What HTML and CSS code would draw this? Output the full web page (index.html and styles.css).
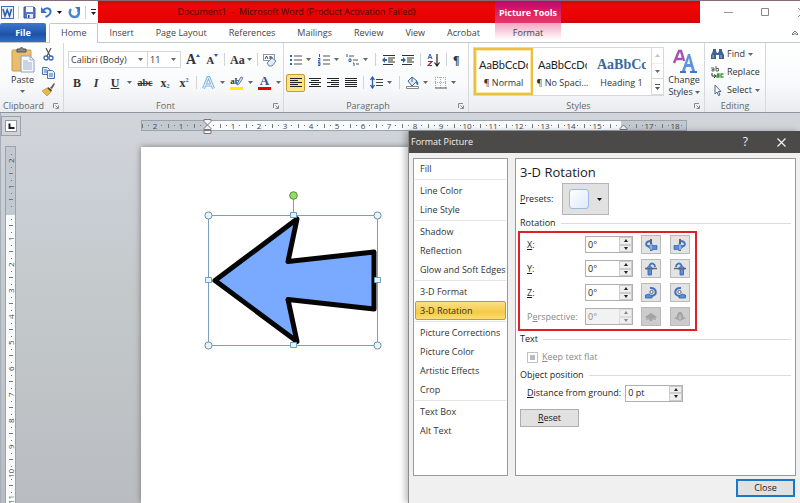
FILE: index.html
```html
<!DOCTYPE html>
<html lang="en">
<head>
    <meta charset="UTF-8">
    <meta name="viewport" content="width=device-width, initial-scale=1.0">
    <title>Document1 - Microsoft Word</title>
    <link rel="stylesheet" href="styles.css">
</head>
<body>
    <div class="word">
        <header class="titlebar">
            <div class="quick-access">
                <svg class="app-icon" width="13" height="13" viewBox="0 0 13 13"><rect x=".5" y=".5" width="12" height="12" fill="#e8f1fb" stroke="#3d74b8"/><path d="M2 3l2 7 2.200-6 2.300 6 2-7" fill="none" stroke="#2a5ea8" stroke-width="1.600"/></svg>
                <span class="bar"></span>
                <button class="icon" aria-label="Save"><svg width="13" height="13" viewBox="0 0 13 13"><path d="M1 1h10l1 1v10H1z" fill="#5a78c8" stroke="#3a4f96"/><path d="M3 1h7v5H3z" fill="#f4f8ff"/><path d="M4 8h6v4H4z" fill="#e4e9f5"/><path d="M5 9h1.500v3H5z" fill="#34488c"/></svg></button>
                <button class="icon" aria-label="Undo"><svg width="13" height="13" viewBox="0 0 13 13"><path d="M3 4.500C6 1 11 2 10.500 6c-.3 2.500-2.500 4-5 5" fill="none" stroke="#3a74c4" stroke-width="2"/><path d="M1 1v6h6z" fill="#3a74c4"/></svg></button>
                <svg class="caret dark" viewBox="0 0 5 3"><path d="M0 0h5L2.500 3z"/></svg>
                <button class="icon redo" aria-label="Repeat"><svg width="13" height="13" viewBox="0 0 13 13"><path d="M3 3C.5 6 2 11 6.500 11S12 6 9.500 4" fill="none" stroke="#4a86d0" stroke-width="2.400"/><path d="M7 1h5v5z" fill="#3a74c4"/></svg></button>
                <span class="bar"></span>
                <svg width="7" height="6" viewBox="0 0 7 6"><path d="M1 0h5v1H1zM1 3h5L3.500 6z" fill="#222"/></svg>
            </div>
            <div class="title">Document1&nbsp; -&nbsp; Microsoft Word (Product Activation Failed)</div>
            <div class="context-title">Picture Tools</div>
            <div class="title-fill"></div>
            <div class="window-buttons">
                <button aria-label="Minimize"><svg width="9" height="9" viewBox="0 0 9 9"><path d="M0 4.500h9" stroke="#999"/></svg></button>
                <button aria-label="Maximize"><svg width="9" height="9" viewBox="0 0 9 9"><path d="M.5.5h7v7h-7z" fill="none" stroke="#888"/></svg></button>
                <button aria-label="Close window"><svg width="9" height="9" viewBox="0 0 9 9"><path d="M0 0l9 9M9 0L0 9" stroke="#888"/></svg></button>
            </div>
        </header>

        <nav class="tabs">
            <div class="main-tabs">
                <a class="file" href="#">File</a>
                <a class="active" href="#">Home</a>
                <a href="#">Insert</a>
                <a href="#">Page Layout</a>
                <a href="#">References</a>
                <a href="#">Mailings</a>
                <a href="#">Review</a>
                <a href="#">View</a>
                <a href="#">Acrobat</a>
            </div>
            <a class="context" href="#">Format</a>
            <button class="icon collapse" aria-label="Minimize the Ribbon"><svg width="8" height="6" viewBox="0 0 8 6"><path d="M1 4l3-3 3 3-1 1-2-1.500L2 5z" fill="#fff" stroke="#555" stroke-width=".8"/></svg></button>
        </nav>

        <div class="ribbon">
            <section class="group clipboard">
                <div class="group-body">
                    <button class="big paste">
                        <svg width="24" height="26" viewBox="0 0 24 26"><rect x="1" y="3" width="19" height="21" rx="1" fill="#e9bd6c" stroke="#c79a48"/><path d="M6 5V2h3c0-2 3-2 3 0h3v3z" fill="#888" stroke="#555"/><path d="M10 9h9l4 4v12H10z" fill="#f4f8fd" stroke="#8ba0bd"/><path d="M19 9v4h4M12 14h5M12 16h9M12 18h9M12 20h9M12 22h9" fill="none" stroke="#9fb2cc"/></svg>
                        <span>Paste</span>
                        <svg class="caret" viewBox="0 0 5 3"><path d="M0 0h5L2.500 3z"/></svg>
                    </button>
                    <div class="stack">
                        <button class="icon" aria-label="Cut"><svg width="13" height="13" viewBox="0 0 13 13"><path d="M4 0l4 8M9 0L5 8" stroke="#555" stroke-width="1.200"/><circle cx="4" cy="10" r="2" fill="none" stroke="#3666ad" stroke-width="1.300"/><circle cx="9" cy="10" r="2" fill="none" stroke="#3666ad" stroke-width="1.300"/></svg></button>
                        <button class="icon" aria-label="Copy"><svg width="13" height="13" viewBox="0 0 13 13"><path d="M.5 1.500h5l2 2v5h-7z" fill="#e6effb" stroke="#4472b4"/><path d="M5.500 4.500h5l2 2v6h-7z" fill="#e6effb" stroke="#4472b4"/><path d="M7 8h4M7 10h4M2 4h3M2 6h3" stroke="#4472b4"/></svg></button>
                        <button class="icon" aria-label="Format Painter"><svg width="13" height="13" viewBox="0 0 13 13"><path d="M8 5l4-5 1 1-3 5z" fill="#7a5a3a"/><path d="M6 4l4 3-1 2-4-3z" fill="#444"/><path d="M5 5l4 4-4 4-5-5z" fill="#e8b84c" stroke="#b98a2a" stroke-width=".6"/></svg></button>
                    </div>
                </div>
                <h2 class="launch">Clipboard <svg class="launcher" viewBox="0 0 6 6"><path d="M.5 5V.5H5M2.500 2.500L5 5M5.500 2.500v3h-3" /></svg></h2>
            </section>

            <section class="group font">
                <div class="group-body rows">
                    <div class="row">
                        <div class="combo">
                            <select class="font-name" aria-label="Font"><option>Calibri (Body)</option></select>
                            <svg class="caret" viewBox="0 0 5 3"><path d="M0 0h5L2.500 3z"/></svg>
                        </div>
                        <div class="combo second">
                            <select class="font-size" aria-label="Font Size"><option>11</option></select>
                            <svg class="caret" viewBox="0 0 5 3"><path d="M0 0h5L2.500 3z"/></svg>
                        </div>
                        <button class="letter grow" aria-label="Grow Font">A<svg width="4" height="3" viewBox="0 0 4 3"><path d="M0 3h4L2 0z" fill="#2c5aa8"/></svg></button>
                        <button class="letter shrink" aria-label="Shrink Font">A<svg width="4" height="3" viewBox="0 0 4 3"><path d="M0 0h4L2 3z" fill="#2c5aa8"/></svg></button>
                        <span class="bar"></span>
                        <button class="letter case" aria-label="Change Case">Aa<svg class="caret" viewBox="0 0 5 3"><path d="M0 0h5L2.500 3z"/></svg></button>
                        <span class="bar"></span>
                        <button class="icon" aria-label="Clear Formatting"><svg width="14" height="14" viewBox="0 0 14 14"><rect x=".5" y="1.500" width="11" height="6" fill="#fff" stroke="#8497b2"/><path d="M2 6l1.500-3L5 6M7 3v3h2V4H7" fill="none" stroke="#333" stroke-width=".9"/><path d="M4 10l5-5 4 3-4 5H6z" fill="#e3ebf7" stroke="#6b86b0"/></svg></button>
                    </div>
                    <div class="row">
                        <button class="letter format" aria-label="Bold">B</button>
                        <button class="letter format italic" aria-label="Italic">I</button>
                        <button class="letter format underline" aria-label="Underline">U</button>
                        <svg class="caret" viewBox="0 0 5 3"><path d="M0 0h5L2.500 3z"/></svg>
                        <button class="letter format strike" aria-label="Strikethrough">abc</button>
                        <button class="letter format" aria-label="Subscript">x<sub>2</sub></button>
                        <button class="letter format" aria-label="Superscript">x<sup>2</sup></button>
                        <span class="bar"></span>
                        <button class="icon" aria-label="Text Effects"><svg width="13" height="14" viewBox="0 0 13 14"><path d="M1.500 12.500L6 1.500h1l4.500 11M3 9h7" fill="none" stroke="#7db4e6" stroke-width="3"/><path d="M1.500 12.500L6 1.500h1l4.500 11M3 9h7" fill="none" stroke="#f4faff" stroke-width="1"/></svg></button>
                        <svg class="caret" viewBox="0 0 5 3"><path d="M0 0h5L2.500 3z"/></svg>
                        <button class="letter color highlight" aria-label="Highlight Color"><span>ab</span><svg width="13" height="14" viewBox="0 0 13 14"><path d="M7 8l4-7 2 1-4 6-2 1z" fill="#dbe6f6" stroke="#4b5f82" stroke-width=".8"/></svg></button>
                        <svg class="caret" viewBox="0 0 5 3"><path d="M0 0h5L2.500 3z"/></svg>
                        <button class="letter color fontcolor" aria-label="Font Color"><span>A</span></button>
                        <svg class="caret" viewBox="0 0 5 3"><path d="M0 0h5L2.500 3z"/></svg>
                    </div>
                </div>
                <h2 class="launch">Font <svg class="launcher" viewBox="0 0 6 6"><path d="M.5 5V.5H5M2.500 2.500L5 5M5.500 2.500v3h-3" /></svg></h2>
            </section>

            <section class="group paragraph">
                <div class="group-body rows">
                    <div class="row">
                        <button class="icon" aria-label="Bullets"><svg width="12" height="12" viewBox="0 0 12 12"><path d="M0 1h2v2H0zM0 5h2v2H0zM0 9h2v2H0z" fill="#2f61ad"/><path d="M4 2h8M4 6h8M4 10h8" stroke="#555"/></svg></button>
                        <svg class="caret" viewBox="0 0 5 3"><path d="M0 0h5L2.500 3z"/></svg>
                        <button class="icon" aria-label="Numbering"><svg width="12" height="12" viewBox="0 0 12 12"><path d="M1.500 0v3M0 4.500h2v1L0 7h2.500M0 8.500h2v3H0M0 10h2" fill="none" stroke="#2f61ad"/><path d="M5 2h7M5 6h7M5 10h7" stroke="#555"/></svg></button>
                        <svg class="caret" viewBox="0 0 5 3"><path d="M0 0h5L2.500 3z"/></svg>
                        <button class="icon" aria-label="Multilevel List"><svg width="13" height="12" viewBox="0 0 13 12"><path d="M1 0v3M3 5h2v2.500H3zM7 9h1v3" fill="none" stroke="#2f61ad"/><path d="M3 2h5M7 6h5M10 10h3" stroke="#555"/></svg></button>
                        <svg class="caret" viewBox="0 0 5 3"><path d="M0 0h5L2.500 3z"/></svg>
                        <span class="bar"></span>
                        <button class="icon" aria-label="Decrease Indent"><svg width="13" height="12" viewBox="0 0 13 12"><path d="M1 1.500h12M6 4h7M6 6h5M6 8h7M1 10.500h10" stroke="#333"/><path d="M0 6l3-3v2h2v2H3v2z" fill="#2f61ad"/></svg></button>
                        <button class="icon" aria-label="Increase Indent"><svg width="13" height="12" viewBox="0 0 13 12"><path d="M1 1.500h12M6 4h7M6 6h5M6 8h7M1 10.500h10" stroke="#333"/><path d="M5 6L2 3v2H0v2h2v2z" fill="#2f61ad"/></svg></button>
                        <span class="bar"></span>
                        <button class="icon" aria-label="Sort"><svg width="13" height="14" viewBox="0 0 13 14"><path d="M1 6l2-5 2 5M1.500 4.500h3" fill="none" stroke="#2f61ad"/><path d="M1 8.500h4l-4 4h4" fill="none" stroke="#8d2f45" stroke-width="1.200"/><path d="M10 1v11M7.500 9.500L10 13l2.500-3.500" fill="none" stroke="#222" stroke-width="1.200"/></svg></button>
                        <span class="bar"></span>
                        <button class="letter pilcrow" aria-label="Show paragraph marks">¶</button>
                    </div>
                    <div class="row">
                        <button class="icon pressed" aria-label="Align Left"><svg width="12" height="10" viewBox="0 0 12 10"><path d="M0 .5h12M0 2.500h8M0 4.500h12M0 6.500h8M0 8.500h12" stroke="#222"/></svg></button>
                        <button class="icon" aria-label="Center"><svg width="12" height="10" viewBox="0 0 12 10"><path d="M0 .5h12M2 2.500h8M0 4.500h12M2 6.500h8M0 8.500h12" stroke="#222"/></svg></button>
                        <button class="icon" aria-label="Align Right"><svg width="12" height="10" viewBox="0 0 12 10"><path d="M0 .5h12M4 2.500h8M0 4.500h12M4 6.500h8M0 8.500h12" stroke="#222"/></svg></button>
                        <button class="icon" aria-label="Justify"><svg width="12" height="10" viewBox="0 0 12 10"><path d="M0 .5h12M0 2.500h12M0 4.500h12M0 6.500h12M0 8.500h12" stroke="#222"/></svg></button>
                        <span class="bar"></span>
                        <button class="icon" aria-label="Line Spacing"><svg width="13" height="13" viewBox="0 0 13 13"><path d="M2.500 2v9M.5 4l2-3 2 3M.5 9l2 3 2-3" fill="none" stroke="#2f61ad" stroke-width="1.300"/><path d="M6 3.500h7M6 6.500h7M6 9.500h7" stroke="#444"/></svg></button>
                        <svg class="caret" viewBox="0 0 5 3"><path d="M0 0h5L2.500 3z"/></svg>
                        <span class="bar"></span>
                        <button class="icon" aria-label="Shading"><svg width="13" height="13" viewBox="0 0 13 13"><path d="M2 5l4-4 5 4-5 5z" fill="#dfe9f7" stroke="#48658f"/><path d="M6 1v5" stroke="#48658f"/><path d="M10 5c2 0 3 2 2 4-2 0-2-2-2-4z" fill="#3d71b9"/><path d="M.5 10.500h12v2H.5z" fill="#fff" stroke="#888"/></svg></button>
                        <svg class="caret" viewBox="0 0 5 3"><path d="M0 0h5L2.500 3z"/></svg>
                        <button class="icon" aria-label="Borders"><svg width="12" height="12" viewBox="0 0 12 12"><path d="M.5 0v11M5.500 0v11M10.500 0v11M0 .5h11M0 5.500h11" stroke="#aaa" stroke-dasharray="1 1"/><path d="M0 11h12" stroke="#555"/></svg></button>
                        <svg class="caret" viewBox="0 0 5 3"><path d="M0 0h5L2.500 3z"/></svg>
                    </div>
                </div>
                <h2 class="launch">Paragraph <svg class="launcher" viewBox="0 0 6 6"><path d="M.5 5V.5H5M2.500 2.500L5 5M5.500 2.500v3h-3" /></svg></h2>
            </section>

            <section class="group styles">
                <div class="group-body">
                    <div class="gallery">
                        <button class="style selected"><span class="sample">AaBbCcDc</span><span>¶ Normal</span></button>
                        <button class="style"><span class="sample">AaBbCcDc</span><span>¶ No Spaci...</span></button>
                        <button class="style"><span class="sample heading">AaBbCc</span><span>Heading 1</span></button>
                        <div class="gallery-scroll">
                            <button aria-label="Scroll up" disabled><svg class="caret" viewBox="0 0 5 3"><path d="M0 3h5L2.500 0z"/></svg></button>
                            <button aria-label="Scroll down"><svg class="caret" viewBox="0 0 5 3"><path d="M0 0h5L2.500 3z"/></svg></button>
                            <button aria-label="More styles"><svg width="5" height="6" viewBox="0 0 5 6"><path d="M0 0h5v1H0zM0 3h5L2.500 6z" fill="#555"/></svg></button>
                        </div>
                    </div>
                    <button class="big change">
                        <svg width="25" height="25" viewBox="0 0 25 25"><path d="M2 14L7 2h2l3 10M4 10h6" fill="none" stroke="#a552b4" stroke-width="2.500"/><path d="M10 22L16 5h2l5 17z" fill="#5f93dc"/><path d="M15 15l2-6 1 6z" fill="#f4f8fd"/><path d="M13 22l1-4h5l1 4z" fill="#f4f8fd"/><path d="M8 23h6M18 23h7" fill="none" stroke="#3f77c8" stroke-width="2"/></svg>
                        <span>Change</span>
                        <span>Styles <svg class="caret" viewBox="0 0 5 3"><path d="M0 0h5L2.500 3z"/></svg></span>
                    </button>
                </div>
                <h2 class="launch">Styles <svg class="launcher" viewBox="0 0 6 6"><path d="M.5 5V.5H5M2.500 2.500L5 5M5.500 2.500v3h-3" /></svg></h2>
            </section>

            <section class="group editing">
                <div class="group-body stack">
                    <button class="command"><svg width="13" height="12" viewBox="0 0 13 12"><path d="M2 1h3v2l1 2h1l1-2V1h3v2l2 4v4H8V7H5v4H0V7l2-4z" fill="#3c6395"/><path d="M2 7v3M10 7v3" stroke="#9dbce2"/></svg>Find<svg class="caret" viewBox="0 0 5 3"><path d="M0 0h5L2.500 3z"/></svg></button>
                    <button class="command"><svg width="13" height="13" viewBox="0 0 13 13"><path d="M0 2h3v3H1V3.500h2M5 0v5h2.500V2.500H5" fill="none" stroke="#666"/><path d="M1 7v3h3M3 8.500L5 10 3 12" fill="none" stroke="#333"/><path d="M6 8h2v3H6V9.500h2M12.500 8H10v3h2.500" fill="none" stroke="#3a9a3a" stroke-width="1.300"/></svg>Replace</button>
                    <button class="command"><svg width="13" height="12" viewBox="0 0 13 12"><path d="M4 1v9l2-2 1.500 3.500L9 11 7.500 7.500H10z" fill="#fff" stroke="#4b6893"/></svg>Select<svg class="caret" viewBox="0 0 5 3"><path d="M0 0h5L2.500 3z"/></svg></button>
                </div>
                <h2>Editing</h2>
            </section>
        </div>

        <main class="workspace">
            <div class="left-rail">
                <button class="tab-stop" aria-label="Left Tab"><svg width="12" height="12" viewBox="0 0 12 12"><rect x=".5" y=".5" width="11" height="11" fill="#fff" stroke="#8f969f"/><path d="M4.500 3.500v4.500h5" fill="none" stroke="#222" stroke-width="2"/></svg></button>
                <div class="ruler vertical">
                    <span>2</span><span>1</span><span></span><span>1</span><span>2</span><span>3</span><span>4</span><span>5</span><span>6</span><span>7</span><span>8</span><span>9</span><span>10</span><span>11</span>
                </div>
            </div>
            <div class="document">
                <div class="ruler horizontal">
                    <span>2</span><span>1</span><span class="marker"><svg width="9" height="16" viewBox="0 0 9 16"><path d="M1 .5h7v2L4.500 6 1 2.500zM4.500 6L8 9.500v1H1v-1zM1 11.500h7v3H1z" fill="#f3f4f6" stroke="#777"/></svg></span><span>1</span><span>2</span><span>3</span><span>4</span><span>5</span><span>6</span><span>7</span><span>8</span><span>9</span><span>10</span><span>11</span><span>12</span><span>13</span><span>14</span><span>15</span><span class="marker right"><svg width="9" height="16" viewBox="0 0 9 16"><path d="M4.500 6L8 9.500v1H1v-1z" fill="#f3f4f6" stroke="#777"/></svg></span><span>17</span><span>18</span>
                </div>
                <div class="page">
                    <svg class="drawing" width="180" height="160" viewBox="203 190 180 160" role="img" aria-label="Left arrow picture">
                        <path d="M215 280.500L297 219l-9 42.500 86-9.500v57l-86-9.500 9 42z" fill="#79aaff" stroke="#050505" stroke-width="5" stroke-linejoin="round"/>
                        <g fill="none" stroke="#7d9fbd"><path d="M208.500 215.500h169v130h-169zM293.500 199v16"/></g>
                        <circle cx="293.500" cy="195.500" r="3.800" fill="#92e05a" stroke="#5d8348"/>
                        <g fill="#e4f4f8" stroke="#6f8f9f">
                            <circle cx="208.500" cy="215.500" r="3.600"/><circle cx="377.500" cy="215.500" r="3.600"/><circle cx="208.500" cy="345.500" r="3.600"/><circle cx="377.500" cy="345.500" r="3.600"/>
                            <path d="M290.500 212.500h6v5h-6zM290.500 342.500h6v5h-6zM205.500 277.500h6v5h-6zM374.500 277.500h6v5h-6z" stroke="#6f9fc4"/>
                        </g>
                    </svg>
                </div>
            </div>
        </main>

        <div class="dialog" role="dialog" aria-labelledby="dialogTitle">
            <div class="dialog-title">
                <span id="dialogTitle">Format Picture</span>
                <button aria-label="Help">?</button>
                <button aria-label="Close dialog"><svg width="9" height="9" viewBox="0 0 9 9"><path d="M.5.5l8 8M8.500.5l-8 8" stroke="#f2f2f2" stroke-width="1.200"/></svg></button>
            </div>
            <div class="dialog-body">
                <nav class="categories">
                    <a href="#">Fill</a>
                    <hr>
                    <a href="#">Line Color</a>
                    <a href="#">Line Style</a>
                    <hr>
                    <a href="#">Shadow</a>
                    <a href="#">Reflection</a>
                    <a href="#">Glow and Soft Edges</a>
                    <hr>
                    <a href="#">3-D Format</a>
                    <a class="current" href="#">3-D Rotation</a>
                    <hr>
                    <a href="#">Picture Corrections</a>
                    <a href="#">Picture Color</a>
                    <a href="#">Artistic Effects</a>
                    <a href="#">Crop</a>
                    <hr>
                    <a href="#">Text Box</a>
                    <a href="#">Alt Text</a>
                </nav>
                <section class="settings">
                    <h1>3-D Rotation</h1>
                    <div class="presets">
                        <label for="presets"><u>P</u>resets:</label>
                        <button id="presets" class="preset-button"><span class="preset-swatch"></span><svg class="caret dark" viewBox="0 0 5 3"><path d="M0 0h5L2.500 3z"/></svg></button>
                    </div>
                    <h3>Rotation</h3>
                    <div class="rotation">
                        <label for="rotX"><u>X</u>:</label>
                        <div class="spin"><input id="rotX" type="text" value="0°"><span><button aria-label="Increase X"></button><button class="down" aria-label="Decrease X"></button></span></div>
                        <button class="turn" aria-label="Left"><svg viewBox="0 0 14 14"><path d="M7 1v12" stroke="#5c6674" stroke-width="2"/><path d="M6 3C1 4 1 8 5 8.500" fill="none" stroke="#3f72c0" stroke-width="1.800"/><path d="M4 8.500L8 5.500v2h5v4H8v1.500z" fill="#5a8cd8" stroke="#2f61ad" stroke-width=".7"/><path d="M7 6v6" stroke="#dfe6ef" stroke-width=".8"/></svg></button>
                        <button class="turn" aria-label="Right"><svg viewBox="0 0 14 14"><path d="M7 1v12" stroke="#5c6674" stroke-width="2"/><path d="M8 3c5 1 5 5 1 5.500" fill="none" stroke="#3f72c0" stroke-width="1.800"/><path d="M10 8.500L6 5.500v2H1v4h5v1.500z" fill="#5a8cd8" stroke="#2f61ad" stroke-width=".7"/><path d="M7 6v6" stroke="#dfe6ef" stroke-width=".8"/></svg></button>

                        <label for="rotY"><u>Y</u>:</label>
                        <div class="spin"><input id="rotY" type="text" value="0°"><span><button aria-label="Increase Y"></button><button class="down" aria-label="Decrease Y"></button></span></div>
                        <button class="turn" aria-label="Up"><svg viewBox="0 0 14 14"><path d="M4 13V7H2l3.500-4L9 7H7.500v6z" fill="#5a8cd8" stroke="#2f61ad" stroke-width=".8"/><path d="M5.500 3C8 0 11 2 11 5" fill="none" stroke="#3f72c0" stroke-width="1.800"/><path d="M1 6.500h12" stroke="#5c6674" stroke-width="1.500"/></svg></button>
                        <button class="turn" aria-label="Down"><svg viewBox="0 0 14 14"><path d="M7 13V7H5l3.500-4L12 7h-1.500v6z" fill="#5a8cd8" stroke="#2f61ad" stroke-width=".8"/><path d="M8.500 3C6 0 3 2 3 5" fill="none" stroke="#3f72c0" stroke-width="1.800"/><path d="M1 6.500h12" stroke="#5c6674" stroke-width="1.500"/></svg></button>

                        <label for="rotZ"><u>Z</u>:</label>
                        <div class="spin"><input id="rotZ" type="text" value="0°"><span><button aria-label="Increase Z"></button><button class="down" aria-label="Decrease Z"></button></span></div>
                        <button class="turn" aria-label="Counter-clockwise"><svg viewBox="0 0 14 14"><circle cx="7.500" cy="6" r="1.600" fill="#fff" stroke="#5c6674"/><path d="M6 2c7-1 8 8 1 8" fill="none" stroke="#3f72c0" stroke-width="2"/><path d="M1.500 12V9L5 8l3 2v2z" fill="#5a8cd8" stroke="#2f61ad" stroke-width=".8"/></svg></button>
                        <button class="turn" aria-label="Clockwise"><svg viewBox="0 0 14 14"><circle cx="6.500" cy="6" r="1.600" fill="#fff" stroke="#5c6674"/><path d="M8 2C1 1 0 10 7 10" fill="none" stroke="#3f72c0" stroke-width="2"/><path d="M12.500 12V9L9 8l-3 2v2z" fill="#5a8cd8" stroke="#2f61ad" stroke-width=".8"/></svg></button>

                        <label class="off" for="persp">P<u>e</u>rspective:</label>
                        <div class="spin"><input id="persp" type="text" value="0°" disabled><span><button aria-label="Increase perspective" disabled></button><button class="down" aria-label="Decrease perspective" disabled></button></span></div>
                        <button class="turn" aria-label="Narrow" disabled><svg viewBox="0 0 14 14"><path d="M1 7l6-4 6 4-2 1H9l-1 3H6L5 8H3z" fill="#a2a2a2"/><path d="M2 9h3M9 9h3" stroke="#999"/></svg></button>
                        <button class="turn" aria-label="Widen" disabled><svg viewBox="0 0 14 14"><path d="M4 8l2-5h2l2 5" fill="#bbb" stroke="#999" stroke-width="1.500"/><path d="M1 8l4-1 2 3 2-3 4 1-6 3z" fill="#a2a2a2"/></svg></button>
                    </div>
                    <h3>Text</h3>
                    <div class="field off"><input id="flat" type="checkbox" disabled><label for="flat"><u>K</u>eep text flat</label></div>
                    <h3>Object position</h3>
                    <div class="field">
                        <label for="distance"><u>D</u>istance from ground:</label>
                        <div class="spin wide"><input id="distance" type="text" value="0 pt"><span><button aria-label="Increase distance"></button><button class="down" aria-label="Decrease distance"></button></span></div>
                    </div>
                    <button class="push"><u>R</u>eset</button>
                </section>
            </div>
            <footer class="dialog-footer"><button class="push default">Close</button></footer>
        </div>
    </div>
</body>
</html>
```
FILE: styles.css
```css
* { box-sizing: border-box; }
body { margin: 0; font-family: "Open Sans", "Noto Sans", sans-serif; font-size: 9px; line-height: 12px; color: #333; }
button, input, select { font: inherit; color: inherit; margin: 0; padding: 0; border: 0; background: none; border-radius: 0; }
button { display: flex; align-items: center; justify-content: center; white-space: nowrap; }
a { color: inherit; text-decoration: none; }
h1, h2, h3 { margin: 0; font-weight: 400; }
svg { display: block; flex: none; }

.word { position: relative; height: 100vh; display: flex; flex-direction: column; overflow: hidden; }
.caret { width: 5px; height: 3px; fill: #666; }
.caret.dark { fill: #111; }
.bar { width: 1px; height: 13px; background: #cfd3d9; flex: none; }

/* title bar */
.titlebar { display: flex; height: 23px; flex: none; border-top: 1px solid #8b6a78; background: #fff; }
.quick-access { width: 98px; display: flex; align-items: center; gap: 4px; padding-left: 1px; }
.quick-access .redo { margin-left: 2px; }
.quick-access .icon:first-of-type { margin: 0; }
.title { flex: 397; display: flex; align-items: center; justify-content: center; background: linear-gradient(#c80a0a, #f00606 20%, #e60303 80%, #c90a0a); color: #4a0404; white-space: nowrap; }
.context-title { width: 66px; text-align: center; line-height: 23px; font-weight: 700; color: #fff; background: linear-gradient(#b80a70, #e0245e 60%, #e6386c); white-space: nowrap; }
.title-fill { flex: 139; background: linear-gradient(#c80a0a, #f00606 20%, #e60303 80%, #c90a0a); }
.window-buttons { width: 100px; display: flex; gap: 28px; padding-left: 24px; overflow: hidden; }

/* tabs */
.tabs { display: flex; height: 20px; flex: none; background: #fff; border-bottom: 1px solid #c3c8cf; }
.main-tabs { display: flex; width: 495px; }
.tabs a { padding: 0 11px; line-height: 20px; color: #444; white-space: nowrap; }
.tabs .file { width: 46px; margin-right: 3px; text-align: center; color: #fff; font-weight: 700; background: linear-gradient(#3b78cf, #1e53a6 60%, #3270c9); border-radius: 2px 2px 0 0; }
.tabs .active { height: 20px; border: 1px solid #c3c8cf; border-bottom: 0; border-radius: 2px 2px 0 0; background: #fff; line-height: 18px; }
.tabs .context { width: 66px; padding: 0; text-align: center; background: linear-gradient(#f3a6c2, #fff 90%); }
.collapse { margin-left: auto; margin-right: 1px; }

/* ribbon */
.ribbon { display: flex; height: 70px; flex: none; background: linear-gradient(#fff, #f9fafb 60%, #e9ecf0); border-bottom: 1px solid #8d949d; }
.group { display: flex; flex-direction: column; border-right: 1px solid #d5d9de; }
.group-body { flex: 1; display: flex; padding: 4px 0 0; }
.group h2 { display: flex; align-items: center; justify-content: center; height: 13px; line-height: 13px; font-size: 9px; color: #666; position: relative; }
.group .launch { padding-right: 16px; }
.launcher { position: absolute; right: 4px; top: 4px; width: 6px; height: 6px; fill: none; stroke: #888; }
.rows { flex-direction: column; gap: 4px; padding-top: 7px; }
.row { display: flex; align-items: center; height: 19px; gap: 5px; }
.big { flex-direction: column; justify-content: flex-start; color: #333; }
.stack { display: flex; flex-direction: column; justify-content: space-between; padding-bottom: 3px; }

.clipboard { width: 64px; }
.clipboard .group-body { padding-left: 9px; gap: 6px; }
.clipboard .stack { padding-top: 1px; }
.paste { width: 27px; }
.paste span { line-height: 14px; }
.paste .caret { margin-top: 3px; }

.font { width: 220px; }
.font .rows { padding-left: 4px; }
.font .row + .row { padding-left: 2px; }
.combo { display: flex; align-items: center; height: 17px; border: 1px solid #d3d6db; background: #fff; padding-right: 4px; }
.combo select { appearance: none; padding: 0 0 0 2px; }
.combo.second { margin-left: -6px; }
.font-name { width: 69px; }
.font-size { width: 23px; }
.letter { font-family: "Liberation Serif", serif; font-weight: 700; color: #333; }
.letter svg { align-self: flex-start; }
.letter .caret { align-self: center; margin-left: 2px; }
.grow { font-size: 14px; }
.shrink { font-size: 11px; margin: 0 1px; }
.case { font-size: 12px; }
.format { width: 14px; font-size: 12px; }
.format.strike { width: 16px; font-size: 10px; text-decoration: line-through; }
.format.italic { font-style: italic; }
.format.underline { text-decoration: underline; }
.format sub, .format sup { font-size: 6px; line-height: 6px; color: #2f61ad; }
.format sub { align-self: flex-end; }
.format sup { align-self: flex-start; }
.color { width: 13px; height: 14px; border-bottom: 3px solid #fff000; font-size: 9px; }
.highlight span { margin-right: -10px; }
.fontcolor { border-color: #e80000; color: #2f4f8f; font-size: 13px; }

.paragraph { width: 185px; }
.paragraph .rows { padding-left: 6px; }
.paragraph .row { gap: 6px; }
.paragraph .caret { margin: 0 1px 0 -2px; }
.pressed { width: 19px; height: 18px; margin: 0 -2px 0 -4px; border: 1px solid #c89b33; background: linear-gradient(#fbdf85, #fce783); border-radius: 2px; }
.pilcrow { font-size: 12px; }

.styles { width: 236px; }
.styles .group-body { padding-left: 4px; }
.gallery { display: flex; width: 192px; height: 49px; border: 1px solid #d5d9de; background: #fff; }
.style { width: 59px; flex-direction: column; gap: 4px; overflow: hidden; padding-top: 3px; }
.style.selected { border: 2px solid #e9bf45; box-shadow: inset 0 0 0 1px #fbe9a9; }
.sample { font-family: Lato, sans-serif; font-size: 11px; line-height: 16px; height: 16px; width: 49px; overflow: hidden; text-align: left; color: #222; }
.sample.heading { font-family: "Liberation Serif", serif; font-weight: 700; font-size: 14px; color: #38699e; }
.gallery-scroll { width: 12px; margin-left: auto; display: flex; flex-direction: column; border-left: 1px solid #d5d9de; }
.gallery-scroll button { flex: 1; border-bottom: 1px solid #d5d9de; }
.gallery-scroll button:disabled { opacity: 0.4; }
.change { width: 40px; padding-top: 2px; }
.change span { display: flex; align-items: center; gap: 2px; height: 12px; }
.editing { width: 61px; }
.editing .group-body { padding: 5px 0 3px 6px; }
.command { gap: 3px; justify-content: flex-start; }

/* workspace and rulers */
.workspace { flex: 1; display: flex; min-height: 0; background: linear-gradient(#d2d5da, #c9ced5 25%, #c4c9ca 45%, #b9bdc2); border-left: 1px solid #a5adb8; }
.left-rail { width: 140px; flex: none; padding-top: 3px; display: flex; flex-direction: column; }
.tab-stop { width: 20px; height: 20px; border: 1px solid #9aa1ab; flex: none; }
.ruler { display: flex; font-size: 8px; line-height: 10px; color: #444; }
.ruler span { flex: none; display: flex; align-items: center; justify-content: center; }
.vertical { flex: 1; flex-direction: column; width: 11px; margin: 10px 0 0 4px; padding-top: 1px; overflow: hidden; border: 1px solid #9aa3b0; border-bottom: 0; background: linear-gradient(#c3c9d1 68px, #fafbfc 68px); }
.vertical span { height: 26px; width: 10px; writing-mode: vertical-rl; transform: rotate(180deg); background: linear-gradient(#777, #777) 3px 0 / 4px 1px no-repeat, linear-gradient(#777, #777) 4px 6px / 1px 1px no-repeat, linear-gradient(#777, #777) 4px 19px / 1px 1px no-repeat; }
.document { flex: 1; min-width: 0; display: flex; flex-direction: column; }
.horizontal { width: 546px; height: 11px; margin: 7px 0 16px; border: 1px solid #9aa3b0; background: linear-gradient(90deg, #c3c9d1 65px, #fafbfc 65px, #fafbfc 479px, #c3c9d1 479px); }
.horizontal span { width: 26px; background: linear-gradient(#777, #777) 0 3px / 1px 4px no-repeat, linear-gradient(#777, #777) 6px 4px / 1px 1px no-repeat, linear-gradient(#777, #777) 19px 4px / 1px 1px no-repeat; }
.horizontal .marker svg { margin: -4px 0 -6px; }
.page { flex: 1; background: #fff; box-shadow: 0 0 6px #777; padding: 43px 0 0 62px; }

/* dialog */
.dialog { position: absolute; top: 131px; right: 0; bottom: 0; width: 49%; min-width: 392px; display: flex; flex-direction: column; background: #f0f0f0; border-left: 1px solid #8b8b8b; box-shadow: -3px 0 6px rgba(0,0,0,0.25); color: #1c1c1c; }
.dialog-title { display: flex; align-items: center; height: 22px; flex: none; background: #4b4a48; color: #f2f2f2; padding: 0 14px 0 2px; }
.dialog-title span { flex: 1; }
.dialog-title button { font-size: 12px; margin-left: 29px; }
.dialog-body { flex: 1; display: flex; gap: 7px; padding: 5px 4px 0; min-height: 0; }
.categories { width: 95px; flex: none; border: 1px solid #9a9a9a; background: #fff; padding: 0 1px; }
.categories a { display: block; height: 19px; line-height: 17px; padding: 0 4px; border: 1px solid transparent; color: #333; white-space: nowrap; }
.categories hr { border: 0; border-top: 1px solid #e4e4e4; margin: 1px 0; }
.categories .current { border-color: #c79a2c; border-radius: 2px; background: linear-gradient(#fbe08a, #f5c945 60%, #fbdf74); }
.settings { flex: 1; border: 1px solid #9a9a9a; background: #fff; padding: 4px 4px 0; }
.settings h1 { font-size: 13px; line-height: 18px; }
.presets { display: flex; align-items: center; margin-top: 2px; }
.presets label { width: 42px; }
.preset-button { width: 47px; height: 32px; gap: 8px; background: #e1e1e1; border: 1px solid #b5b5b5; }
.preset-swatch { width: 20px; height: 20px; border: 1px solid #9fb9df; border-radius: 3px; background: linear-gradient(135deg, #fff, #dce9fb); }
.settings h3 { display: flex; align-items: center; gap: 5px; height: 16px; font-size: 9px; white-space: nowrap; }
.settings h3::after { content: ""; flex: 1; height: 1px; background: #dcdcdc; }
.rotation { display: grid; grid-template-columns: 58px 48px 28px 29px; row-gap: 5px; align-items: center; width: 179px; margin: 0 0 0 -2px; padding: 2px 5px 3px 7px; border: 2px solid #df2026; }
.turn { width: 20px; height: 19px; background: #e3e3e3; border: 1px solid #bababa; margin-left: 8px; }
.turn:nth-child(4n) { margin-left: 9px; }
.turn svg { width: 14px; height: 14px; }
.turn:disabled { background: #ccc; }
.off { color: #8a8a8a; }
.spin { display: flex; width: 48px; height: 17px; border: 1px solid #b0b0b0; background: #fff; }
.spin input { flex: 1; min-width: 0; padding: 0 2px; }
.spin input:disabled { background: #f2f2f2; color: #8a8a8a; }
.spin span { display: flex; flex-direction: column; width: 13px; background: #eee; }
.spin button { flex: 1; border: 1px solid #ccc; min-height: 0; }
.spin button::before { content: ""; border: 2px solid transparent; border-top: 0; border-bottom: 3px solid #222; }
.spin .down::before { border-bottom: 0; border-top: 3px solid #222; }
.spin button:disabled { opacity: 0.5; }
.spin.wide { width: 58px; }
.field { display: flex; align-items: center; gap: 4px; height: 20px; padding-left: 7px; }
.field input[type="checkbox"] { appearance: none; width: 11px; height: 11px; border: 1px solid #c2c2c2; background: #bbb; box-shadow: inset 0 0 0 2px #fff; }
.push { width: 59px; height: 18px; background: #e1e1e1; border: 1px solid #adadad; }
.settings .push { margin-top: 6px; }
.push.default { border: 2px solid #1a78c8; }
.dialog-footer { display: flex; justify-content: flex-end; flex: none; padding: 3px 5px 6px; }
```
